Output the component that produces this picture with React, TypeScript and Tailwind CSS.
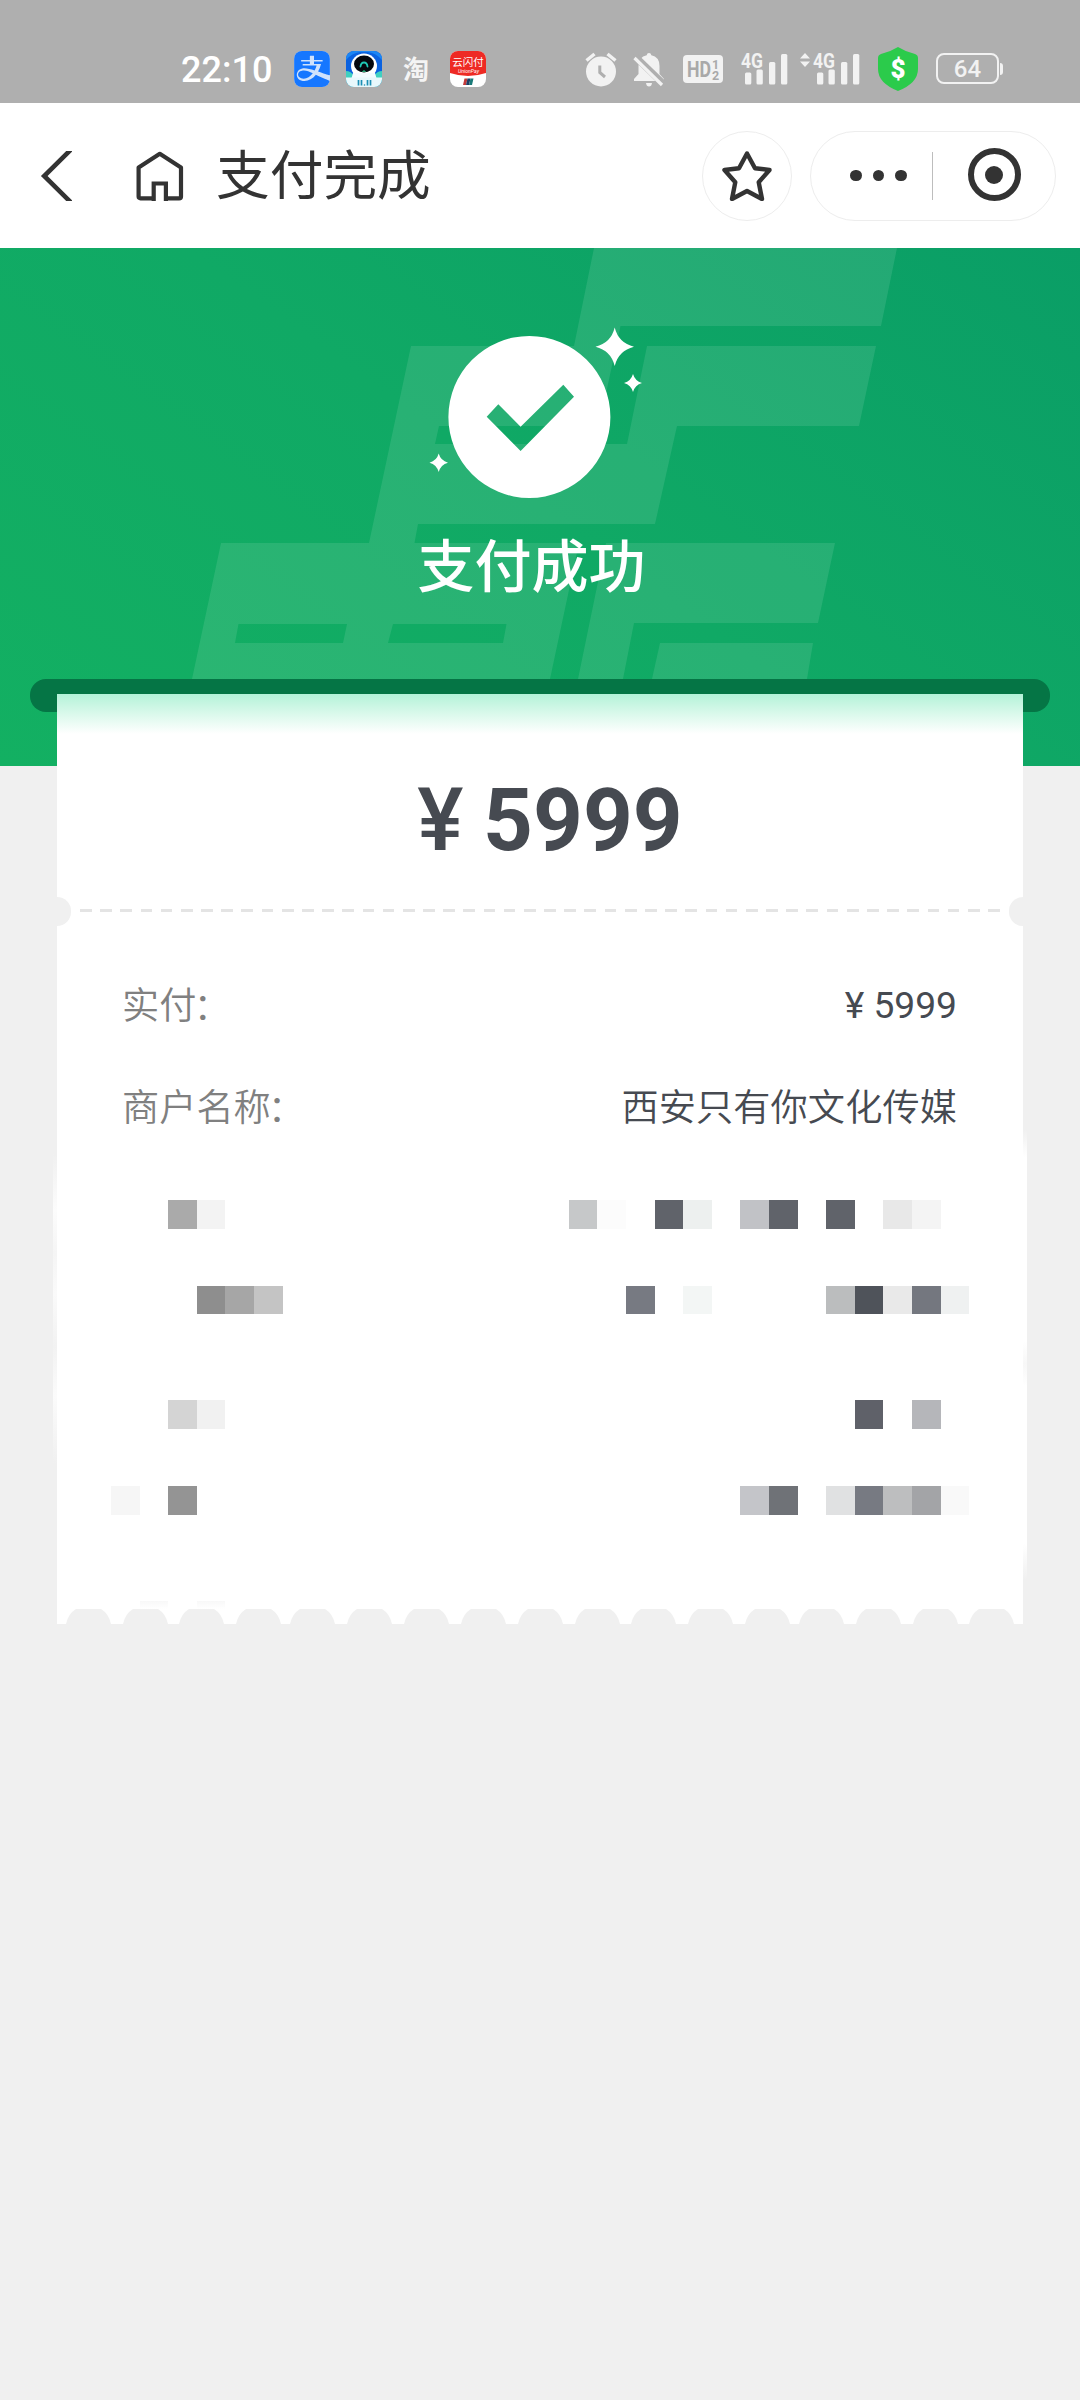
import type { ReactNode } from "react";
import { SiAlipay } from "react-icons/si";

// ─── Data ─────────────────────────────────────────────────────────────────
const rows = [
  { label: "实付", value: "¥ 5999", valueClass: "font-normal -mt-[2px]" },
  { label: "商户名称", value: "西安只有你文化传媒", valueClass: "font-[350] tracking-[0.1px]" },
];

// Hidden rows: [column, colour] on a 30 column grid
const mosaic: { className: string; cells: [number, string][] }[] = [
  {
    className: "mt-[40px] h-[29px]",
    cells: [
      [2, "#aaaaaa"], [3, "#f3f3f3"], [16, "#c6c8c9"], [17, "#fcfcfc"],
      [19, "#60636a"], [20, "#edf0ef"], [22, "#c1c2c6"], [23, "#60636a"],
      [25, "#60636a"], [27, "#e8e8e8"], [28, "#f4f4f4"],
    ],
  },
  {
    className: "mt-[57px] h-[28px]",
    cells: [
      [3, "#8e8e8e"], [4, "#a6a6a6"], [5, "#c4c4c4"], [18, "#777a82"],
      [20, "#f3f6f5"], [25, "#bbbdbe"], [26, "#4f535a"], [27, "#e9e9e9"],
      [28, "#74777f"], [29, "#eff1f1"],
    ],
  },
  {
    className: "mt-[86px] h-[29px]",
    cells: [[2, "#d4d4d4"], [3, "#f1f1f1"], [26, "#5f6169"], [28, "#b5b6ba"]],
  },
  {
    className: "mt-[57px] h-[29px]",
    cells: [
      [0, "#f6f6f6"], [2, "#949494"], [22, "#c4c5c9"], [23, "#6f7277"],
      [25, "#e0e1e2"], [26, "#777a82"], [27, "#bdbebf"], [28, "#a3a4a7"],
      [29, "#f9f9f9"],
    ],
  },
];

const scallops = [9, 66, 122, 179, 233, 290, 347, 404, 461, 518, 574, 631, 688, 742, 799, 856, 912];

// ─── Status bar icons ─────────────────────────────────────────────────────
function RobotIcon() {
  return (
    <svg width="36" height="36" viewBox="0 0 36 36">
      <defs>
        <clipPath id="robot">
          <rect width="36" height="36" rx="8" />
        </clipPath>
      </defs>
      <g clipPath="url(#robot)">
        <rect width="36" height="36" fill="#0b62e0" />
        <path d="M0 9 Q6 2 14 1 H22 Q30 2 36 9 V4 L30 0 H6 L0 4Z" fill="#1b86f5" />
        <path d="M0 20 Q5 20 8 25 H28 Q31 20 36 20 V36 H0Z" fill="#3fd0c0" />
        <ellipse cx="18" cy="15" rx="13" ry="12.5" fill="#fff" />
        <path d="M7 22 H29 L31 29 H5Z" fill="#f3fbff" />
        <ellipse cx="18" cy="13" rx="10" ry="8.5" fill="#05080f" />
        <path d="M14.5 15.5 Q15 11.5 18 11.5 Q21 11.5 21.5 15.5" fill="none" stroke="#1fc7b5" strokeWidth="1.8" strokeLinecap="round" />
        <path d="M15.5 20.8 L18 19.2 L20.5 20.8Z" fill="#35e09a" />
        <rect y="26.5" width="36" height="10" fill="#e8f8fc" />
        <path d="M12.5 29 V34.5 M15.5 29 V34.5 M21.5 29 V34.5 M24.5 29 V34.5" stroke="#1c8fb5" strokeWidth="1.7" />
        <circle cx="18.5" cy="34" r="0.8" fill="#1c8fb5" />
      </g>
    </svg>
  );
}

function UnionPayIcon() {
  return (
    <svg width="36" height="36" viewBox="0 0 36 36">
      <defs>
        <clipPath id="unionpay">
          <rect width="36" height="36" rx="8" />
        </clipPath>
      </defs>
      <g clipPath="url(#unionpay)">
        <rect width="36" height="36" fill="#fff" />
        <path d="M0 0 H36 V22 Q18 28 0 22Z" fill="#ee2a24" />
        <text x="18" y="15" textAnchor="middle" fontSize="10.5" fill="#fff" fontFamily="'Noto Sans CJK SC', sans-serif">云闪付</text>
        <text x="18.5" y="21.5" textAnchor="middle" fontSize="5.2" fontStyle="italic" fill="#fff" fontFamily="Roboto, sans-serif">UnionPay</text>
        <path d="M14.5 27.5 H17.5 L16 34 H13Z" fill="#c23a3a" />
        <path d="M17.5 27.5 H20.5 L19 34 H16Z" fill="#1d3f66" />
        <path d="M20.5 27.5 H23.5 L22 34 H19Z" fill="#1a7a78" />
      </g>
    </svg>
  );
}

function AlarmIcon() {
  return (
    <svg width="32" height="36" viewBox="0 0 32 36" className="ml-auto">
      <circle cx="16" cy="20.5" r="15" fill="#f2f2f2" />
      <path d="M1.5 9.5 L9.5 3 M30.5 9.5 L22.5 3" stroke="#f2f2f2" strokeWidth="3.4" />
      <path d="M14.8 14.5 V21.5 L20 26" fill="none" stroke="#afafaf" strokeWidth="3" />
    </svg>
  );
}

function BellOffIcon() {
  return (
    <svg width="32" height="36" viewBox="0 0 32 36" className="ml-4">
      <path d="M16 2 Q18 2 18.3 4.3 Q26.5 6 26.5 15 V23 L31 28 V30 H1 V28 L5.5 23 V15 Q5.5 6 13.7 4.3 Q14 2 16 2Z" fill="#f2f2f2" />
      <path d="M13 32 H19 Q18.5 35.5 16 35.5 Q13.5 35.5 13 32Z" fill="#f2f2f2" />
      <path d="M0 3.5 L31 33.5" stroke="#afafaf" strokeWidth="7" />
      <path d="M1.5 7 L29 34" stroke="#f2f2f2" strokeWidth="3.2" />
    </svg>
  );
}

function HdIcon() {
  return (
    <svg width="40" height="28" viewBox="0 0 40 28" className="ml-[18px]">
      <rect width="40" height="28" rx="4" fill="#f2f2f2" />
      <g fill="#a9a9a9" fontFamily="Roboto, sans-serif" fontWeight="700">
        <text x="4" y="21.5" fontSize="21.5" textLength="24" lengthAdjust="spacingAndGlyphs">HD</text>
        <text x="29" y="13.5" fontSize="12.5">1</text>
        <text x="29" y="24.5" fontSize="12.5">2</text>
      </g>
    </svg>
  );
}

function SignalIcon({ arrows = false }: { arrows?: boolean }) {
  return (
    <svg
      width={arrows ? 60 : 47}
      height="42"
      viewBox={arrows ? "-13 -4 60 42" : "0 -4 47 42"}
      className={arrows ? "ml-[12px]" : "ml-[18px]"}
    >
      <g fill="#f2f2f2">
        {arrows && <path d="M-13 6.5 L-8 1 L-3 6.5Z M-13 9.5 L-8 15 L-3 9.5Z" />}
        <text x="0" y="15.5" fontSize="20" fontFamily="Roboto, sans-serif" fontWeight="700" textLength="22" lengthAdjust="spacingAndGlyphs">4G</text>
        <rect x="4" y="20.5" width="6.3" height="12" rx="1.5" />
        <rect x="15.5" y="17.5" width="6.3" height="15" rx="1.5" />
        <rect x="28" y="10" width="6.3" height="22.5" rx="1.5" />
        <rect x="40" y="2" width="6.3" height="30.5" rx="1.5" />
      </g>
    </svg>
  );
}

function ShieldIcon() {
  return (
    <svg width="40" height="44" viewBox="0 0 40 44" className="ml-[18px]">
      <path d="M20 0 Q28 5 37 7 Q40 8 40 11 V22 Q40 36 20 44 Q0 36 0 22 V11 Q0 8 3 7 Q12 5 20 0Z" fill="#2bcb4b" />
      <text x="20" y="31" textAnchor="middle" fontSize="26" fontWeight="900" fill="#fff" fontFamily="Roboto, sans-serif">$</text>
    </svg>
  );
}

function StatusBar() {
  return (
    <div className="flex h-[103px] items-center bg-[#afafaf] pt-[34px] pr-[77px] pl-[181px]">
      <span className="w-[113px] pt-[3px] text-[36px] leading-none font-medium text-white">22:10</span>
      <div className="flex size-9 items-center justify-center overflow-hidden rounded-lg bg-[#cfe2fc]">
        <SiAlipay className="size-9 shrink-0 text-[#1677ff]" />
      </div>
      <div className="ml-4">
        <RobotIcon />
      </div>
      <span className="ml-[21px] w-7 pt-[2px] text-[26px] leading-none font-bold text-[#f4f4f4]">淘</span>
      <div className="ml-[19px]">
        <UnionPayIcon />
      </div>
      <AlarmIcon />
      <BellOffIcon />
      <HdIcon />
      <SignalIcon />
      <SignalIcon arrows />
      <ShieldIcon />
      <div className="ml-[18px] flex h-[31px] w-[63px] items-center justify-center rounded-[8px] border-2 border-[#f2f2f2] text-[24px] leading-none font-medium text-[#f2f2f2]">
        64
      </div>
      <div className="ml-px h-3 w-[3px] rounded-r bg-[#f2f2f2]" />
    </div>
  );
}

// ─── Title bar ────────────────────────────────────────────────────────────
function TitleBar() {
  return (
    <div className="flex h-[145px] items-center bg-white pr-6 pl-10 text-[#333333]">
      <svg width="32" height="50" viewBox="0 0 32 50" fill="none" stroke="currentColor" strokeWidth="4.6">
        <path d="M31 -1.5 L4.2 25 L31 51.5" />
      </svg>
      <svg width="48" height="50" viewBox="0 0 48 50" fill="none" stroke="currentColor" strokeWidth="4.2" strokeLinejoin="round" className="ml-16">
        <path d="M17.7 50 V32.5 H29.9 V50" strokeLinejoin="miter" />
        <path d="M17.7 47.3 H4.5 Q2.6 47.3 2.6 45.4 V16.5 L23.8 2.8 L45 16.5 V45.4 Q45 47.3 43.1 47.3 H29.9" />
      </svg>
      <h1 className="ml-[32px] pt-[2px] text-[53.7px] leading-none">支付完成</h1>
      <div className="ml-auto flex size-[90px] items-center justify-center rounded-full border border-[#ededed]">
        <svg width="50" height="50" viewBox="0 0 50 50" fill="none" stroke="currentColor" strokeWidth="4.4" strokeLinejoin="round">
          <path d="M25 2.5 L33 17.2 L47.5 19 L36.7 31.2 L40 48 L25 40 L10 48 L13.3 31.2 L2.5 19 L17 17.2Z" />
        </svg>
      </div>
      <div className="ml-[18px] flex h-[90px] w-[246px] items-center rounded-full border border-[#ededed] pl-[39px]">
        <div className="flex gap-[11px]">
          <span className="size-[11.5px] rounded-full bg-[#333333]" />
          <span className="size-[11.5px] rounded-full bg-[#333333]" />
          <span className="size-[11.5px] rounded-full bg-[#333333]" />
        </div>
        <span className="ml-[25px] h-12 w-px bg-[#bdbdbd]" />
        <div className="mb-[2px] ml-[35px] flex size-[53px] items-center justify-center rounded-full border-[6px] border-[#333333]">
          <span className="size-[18px] rounded-full bg-[#333333]" />
        </div>
      </div>
    </div>
  );
}

// ─── Green banner ─────────────────────────────────────────────────────────
function Banner() {
  return (
    <div className="relative h-[518px] bg-linear-[36deg] from-[#13b062] via-[#10a965] to-[#0a9e66]">
      <svg width="1080" height="431" viewBox="0 248 1080 431" className="absolute top-0 left-0">
        <g fill="#fff" fillOpacity="0.1">
          <path
            fillRule="evenodd"
            d="M594 248 H897 L881 326 H620.5 L599 426 H439 L435 444 H627 L647 346 H876 L859 426 H677 L655 524 H418 L414.5 543 H579 L550 679 H192 L221 543 H369 L411 346 H574Z M238.5 624 H347 L343 643 H235Z M393 624 H506.5 L503 643 H388Z"
          />
          <path d="M606 543 H835 L818 623 H634 L623 679 H578Z" />
          <path d="M660 643 H813 L807 679 H652Z" />
        </g>
      </svg>
      <div className="relative flex flex-col items-center">
        <svg width="222" height="180" viewBox="429 322 222 180" className="mt-[74px]">
          <path
            fill="#fff"
            fillRule="evenodd"
            d="M448.4 417 a81 81 0 1 0 162 0 a81 81 0 1 0 -162 0Z M486.7 416.7 L498.3 404.3 L520.6 426.7 L563.3 384.7 L574 396.7 L520.6 451Z"
          />
          <g fill="#fff">
            <path d="M614.7 327.5 Q618.5 343 634 346.7 Q618.5 350.5 614.7 366 Q611 350.5 595.5 346.7 Q611 343 614.7 327.5Z" />
            <path d="M633 374 Q635 381 642 383 Q635 385 633 392 Q631 385 624 383 Q631 381 633 374Z" />
            <path d="M438.7 453.5 Q440.7 460.7 448 462.7 Q440.7 464.7 438.7 472 Q436.7 464.7 429.5 462.7 Q436.7 460.7 438.7 453.5Z" />
          </g>
        </svg>
        <p className="mt-[36px] mr-[17px] text-[57px] leading-[60px] font-medium text-white">支付成功</p>
      </div>
    </div>
  );
}

function Cells({ className, children }: { className: string; children: ReactNode }) {
  return <div className={`ml-[54px] grid w-[859px] grid-cols-[repeat(30,28.615px)] ${className}`}>{children}</div>;
}

// ─── Receipt ──────────────────────────────────────────────────────────────
function Receipt() {
  return (
    <div className="relative mx-[57px] -mt-[18px] h-[930px] bg-white text-[#464a51]">
      {/* Soft edges beside the hidden rows */}
      <div className="absolute top-[460px] -left-1 h-[310px] w-1 bg-[linear-gradient(#f0f0f0,#fcfcfc_18%,#f5f5f5_32%,#fafafa_45%,#f2f2f2_62%,#fbfbfb_78%,#f0f0f0)]" />
      <div className="absolute top-[436px] -right-1 h-[450px] w-1 bg-[linear-gradient(#f0f0f0,#ffffff_6%,#ffffff_47%,#f7f7f7_52%,#ffffff_57%,#ffffff_92%,#f0f0f0)]" />

      <div className="flex h-[203px] justify-center bg-linear-to-b from-[#b3f2d8] to-white to-[40px] pt-[76px]">
        <p className="ml-[18px] text-[87px] leading-[100px] font-bold">
          <span className="mr-[-2px] ml-[2px] font-medium">¥</span> 5999
        </p>
      </div>

      <div className="flex h-[29px] items-center justify-between">
        <span className="h-[29px] w-[14px] rounded-r-full bg-[#f0f0f0]" />
        <span className="mb-[2px] h-[3px] w-[920px] bg-[repeating-linear-gradient(90deg,#e4e4e4_0_11.7px,#ffffff_11.7px_20.18px)]" />
        <span className="h-[29px] w-[14px] rounded-l-full bg-[#f0f0f0]" />
      </div>

      <div className="mt-[30px] px-[66px]">
        {rows.map((row) => (
          <div key={row.label} className="flex h-[102px] items-center justify-between text-[37.2px] leading-none">
            <span className="-ml-px flex font-[350] text-[#808080]">
              {row.label}
              <span className="mt-px -ml-[3px]">：</span>
            </span>
            <span className={row.valueClass}>{row.value}</span>
          </div>
        ))}
      </div>

      {mosaic.map((line, i) => (
        <Cells key={i} className={line.className}>
          {line.cells.map(([col, color]) => (
            <span key={col} className="row-start-1" style={{ gridColumnStart: col + 1, backgroundColor: color }} />
          ))}
        </Cells>
      ))}

      <Cells className="mt-[86px] h-2">
        <span className="col-start-2 row-start-1 bg-linear-to-b from-[#f8f8f8] to-white" />
        <span className="col-start-4 row-start-1 bg-linear-to-b from-[#f8f8f8] to-white" />
      </Cells>

      {/* Torn edge */}
      <svg width="966" height="15" viewBox="0 0 966 15" fill="#f0f0f0" className="block">
        {scallops.map((x) => (
          <path key={x} d={`M${x} 15 Q${x + 2} 5 ${x + 10} 0 H${x + 35} Q${x + 43} 5 ${x + 45} 15Z`} />
        ))}
      </svg>
    </div>
  );
}

export default function App() {
  return (
    <div className="h-[2400px] w-[1080px] overflow-hidden bg-[#f0f0f0] font-[Roboto,'Noto_Sans_CJK_SC',sans-serif]">
      <StatusBar />
      <TitleBar />
      <Banner />
      <div className="relative -mt-[87px] px-[30px]">
        <div className="h-[33px] rounded-2xl bg-[#057545]" />
      </div>
      <Receipt />
    </div>
  );
}
